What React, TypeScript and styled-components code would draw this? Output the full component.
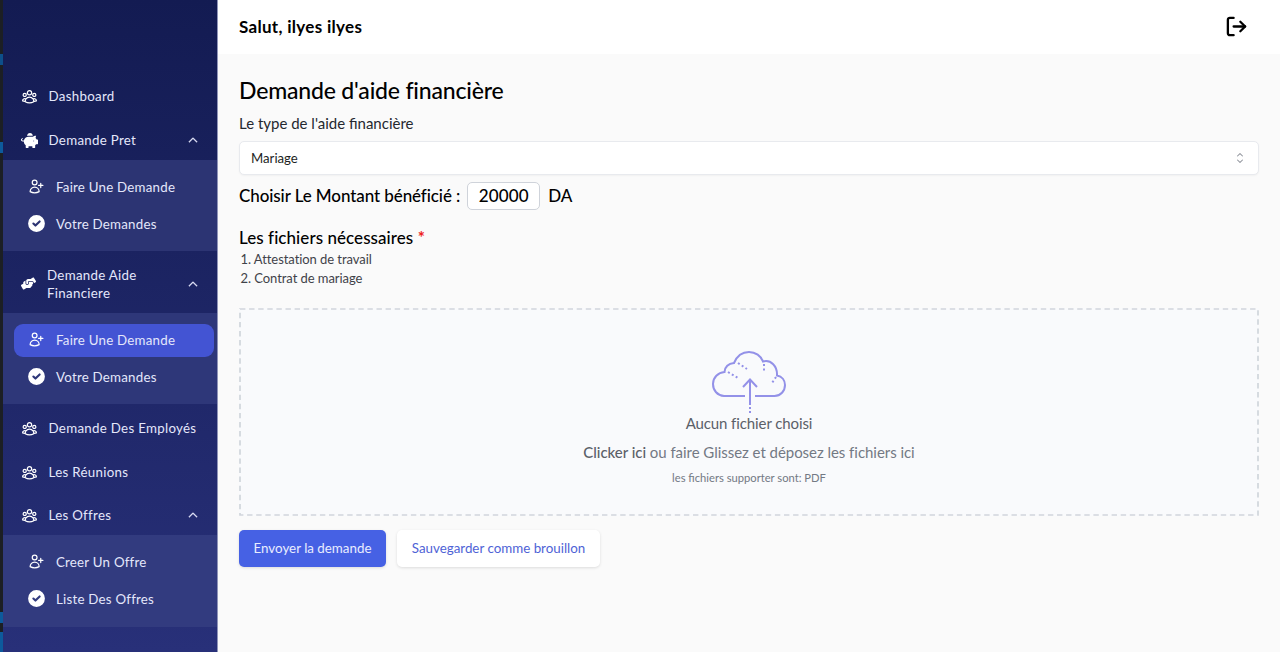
import React from "react";
import styled, { createGlobalStyle } from "styled-components";
import { HiOutlineUserGroup, HiOutlineUserPlus, HiChevronUp, HiChevronUpDown } from "react-icons/hi2";
import { HiCheckCircle } from "react-icons/hi";
import { FaPiggyBank, FaHandsHelping } from "react-icons/fa";
import { FiLogOut } from "react-icons/fi";

const Global = createGlobalStyle`
  * { box-sizing: border-box; }
  body { margin: 0; background: #fafafa; font-family: Lato, sans-serif; color: #000; }
  h1, h2, p { margin: 0; padding: 0; font-weight: inherit; }
  button { font: inherit; border: 0; }
`;

const Page = styled.div`display: flex; height: 652px; overflow: hidden;`;
const Edge = styled.div`
  width: 3px; flex: none;
  background: linear-gradient(#1c1f24 0 54px, #0d4f8a 54px 65px, #1c1f24 65px 142px, #0d5a9c 142px 153px, #1c1f24 153px 612px, #0d5a9c 612px 623px, #1c1f24 623px 632px, #0d5a9c 632px);
`;
const Sidebar = styled.nav`
  width: 215px; flex: none; padding-top: 74px;
  background: linear-gradient(#131b52, #283079);
  border-right: 1px solid #8f94b8;
  color: #e4e7fb; font-size: 13.3px; letter-spacing: 0.3px;
`;
const Item = styled.div<{ $h?: number; $drop?: number }>`
  display: flex; align-items: center; height: ${(p) => p.$h ?? 44}px;
  padding: ${(p) => p.$drop ?? 0}px 18px 0; line-height: 18px;
`;
const ItemIcon = styled.span<{ $w?: number }>`
  display: flex; width: ${(p) => p.$w ?? 27.5}px; flex: none; color: #fff;
`;
const Label = styled.span<{ $ls?: number }>`
  letter-spacing: ${(p) => (p.$ls === undefined ? "inherit" : `${p.$ls}px`)}; white-space: pre-line;
`;
const Caret = styled.span`
  margin-left: auto; display: flex;
  svg { stroke: currentColor; stroke-width: 1; }
`;
const Group = styled.div<{ $tone: string; $h?: number }>`
  height: ${(p) => p.$h ?? 91}px; padding: 11px 3px 0 11px;
  background: ${(p) => p.$tone};
  display: flex; flex-direction: column; gap: 4px; letter-spacing: 0.23px;
`;
const SubItem = styled.div<{ $active?: boolean }>`
  display: flex; align-items: center; height: 33px; padding: 0 0 2px 13.5px; border-radius: 9px;
  background: ${(p) => (p.$active ? "#4354d3" : "transparent")};
`;
const SubIcon = styled.span`
  display: flex; justify-content: center; width: 18px; margin-right: 10.5px; color: #fff;
  svg { flex: none; }
`;

const Main = styled.main`flex: 1; min-width: 0;`;
const Header = styled.header`
  height: 54px; background: #fff; display: flex; align-items: center; justify-content: space-between;
  padding: 0 32px 1px 21px; font-size: 17px; font-weight: 700;
`;
const Greeting = styled.div`letter-spacing: 0.3px; padding-bottom: 1px;`;
const Content = styled.section`padding: 21px 21px 0;`;
const Title = styled.h1`font-size: 23px; line-height: 30px; font-weight: 500; letter-spacing: -0.18px;`;
const FieldLabel = styled.p`font-size: 15px; line-height: 20px; margin-top: 8px; color: #25282f;`;
const Select = styled.div`
  margin-top: 8px; height: 34px; border: 1px solid #e8eaee; border-radius: 5px; background: #fff;
  display: flex; align-items: center; justify-content: space-between; padding: 0 10px 0 11px;
  font-size: 13.2px; color: #1d1f24; box-shadow: 0 1px 2px rgba(0, 0, 0, 0.04);
  svg { color: #8b8f98; }
`;
const Amount = styled.div`
  display: flex; align-items: center; height: 28px; margin-top: 7px; font-size: 17px; font-weight: 500;
  line-height: 20px;
`;
const AmountBox = styled.span`
  width: 73px; height: 28px; margin: 0 8px 0 7px; border: 1px solid #cfd3da; border-radius: 5px; background: #fff;
  display: flex; align-items: center; justify-content: center;
`;
const FilesTitle = styled.h2`font-size: 17px; line-height: 24px; margin-top: 16px; font-weight: 500; letter-spacing: 0.06px;`;
const Star = styled.span`color: #ee2020; font-weight: 700;`;
const Files = styled.div`
  font-size: 13px; line-height: 18.5px; height: 37px; color: #3f4249; padding-left: 1.5px; letter-spacing: -0.06px;
`;
const Drop = styled.div`
  margin-top: 21px; height: 208px; background: #f9fafc;
  display: flex; flex-direction: column; align-items: center; position: relative; color: #737984;
  padding-top: 42px;
`;
const DashFrame = styled.svg`position: absolute; inset: 0; width: 100%; height: 100%;`;
const Chosen = styled.p`font-size: 15px; line-height: 22px; color: #5b6069; margin-top: -2px; letter-spacing: -0.1px;`;
const Hint = styled.p`font-size: 15px; line-height: 22px; margin-top: 7px; letter-spacing: -0.04px;`;
const Strong = styled.span`font-weight: 500; color: #5b6069;`;
const Formats = styled.p`font-size: 11.2px; line-height: 16px; margin-top: 7px;`;
const Actions = styled.div`display: flex; gap: 11px; margin-top: 14px;`;
const Button = styled.button<{ $primary?: boolean; $w: number }>`
  width: ${(p) => p.$w}px; height: 37px; padding: 0 0 1px; border-radius: 5px; font-size: 13.35px;
  background: ${(p) => (p.$primary ? "#4661e4" : "#fff")};
  color: ${(p) => (p.$primary ? "#e9edff" : "#4f63d6")};
  box-shadow: 0 1px 3px rgba(0, 0, 0, 0.12);
`;

const Users = ({ label, open, h, drop }: { label: string; open?: boolean; h?: number; drop?: number }) => (
  <Item $h={h} $drop={drop}>
    <ItemIcon><HiOutlineUserGroup size={17} strokeWidth={1.7} /></ItemIcon>
    <Label>{label}</Label>
    {open && <Caret><HiChevronUp size={12} /></Caret>}
  </Item>
);
const Sub = ({ label, check, active }: { label: string; check?: boolean; active?: boolean }) => (
  <SubItem $active={active}>
    <SubIcon>{check ? <HiCheckCircle size={21} /> : <HiOutlineUserPlus size={17} strokeWidth={1.7} />}</SubIcon>
    <Label>{label}</Label>
  </SubItem>
);

const Cloud = () => (
  <svg width="76" height="64" viewBox="0 0 76 64" fill="none" stroke="#9391e8" strokeWidth="2">
    <path d="M34 46H13C6.500 45.500 2 40.500 2 34C2 27.500 7 22.500 13.500 22C14 17 17.500 13.500 23 13C26 6 31.500 2 38 2C44.500 2 50 6 52 11.500C60 9.500 66.500 16 66 25.500C71 26.500 74 30.500 74 35C74 41 69.500 46 63.500 46H44" />
    <path d="M39 55V30M32 37L39 29.500L46 37" />
    <path d="M39 57V64" strokeDasharray="2 2" />
    <path d="M17 22L27 28M27 13L36 19M53 14V22M65 27L61 33" strokeDasharray="2 2.500" />
  </svg>
);

export default function App() {
  return (
    <Page>
      <Global />
      <Edge />
      <Sidebar>
        <Users label="Dashboard" />
        <Item $h={42} $drop={2}>
          <ItemIcon><FaPiggyBank size={17} /></ItemIcon>
          <Label>Demande Pret</Label>
          <Caret><HiChevronUp size={12} /></Caret>
        </Item>
        <Group $tone="#2c3473"><Sub label="Faire Une Demande" /><Sub label="Votre Demandes" check /></Group>
        <Item $h={62} $drop={3}>
          <ItemIcon $w={26}><FaHandsHelping size={15} /></ItemIcon>
          <Label>{"Demande Aide\nFinanciere"}</Label>
          <Caret><HiChevronUp size={12} /></Caret>
        </Item>
        <Group $tone="#2e3779"><Sub label="Faire Une Demande" active /><Sub label="Votre Demandes" check /></Group>
        <Users label="Demande Des Employés" drop={4} />
        <Users label="Les Réunions" drop={4} />
        <Users label="Les Offres" open h={43} drop={3} />
        <Group $tone="#323b7f" $h={92}><Sub label="Creer Un Offre" /><Sub label="Liste Des Offres" check /></Group>
      </Sidebar>
      <Main>
        <Header><Greeting>Salut, ilyes ilyes</Greeting><FiLogOut size={23} strokeWidth={2.4} /></Header>
        <Content>
          <Title>Demande d'aide financière</Title>
          <FieldLabel>Le type de l'aide financière</FieldLabel>
          <Select><Label>Mariage</Label><HiChevronUpDown size={16} /></Select>
          <Amount>
            <Label $ls={-0.09}>Choisir Le Montant bénéficié :</Label>
            <AmountBox><Label $ls={0.15}>20000</Label></AmountBox>
            <Label>DA</Label>
          </Amount>
          <FilesTitle>Les fichiers nécessaires <Star>*</Star></FilesTitle>
          <Files><div>1. Attestation de travail</div><div>2. Contrat de mariage</div></Files>
          <Drop>
            <DashFrame><rect x="1" y="1" width="1018" height="206" fill="none" stroke="#d1d5db" strokeWidth="1.7" strokeDasharray="5.4 3.7" /></DashFrame>
            <Cloud />
            <Chosen>Aucun fichier choisi</Chosen>
            <Hint><Strong>Clicker ici</Strong> ou faire Glissez et déposez les fichiers ici</Hint>
            <Formats>les fichiers supporter sont: PDF</Formats>
          </Drop>
          <Actions>
            <Button $primary $w={147}>Envoyer la demande</Button>
            <Button $w={203}>Sauvegarder comme brouillon</Button>
          </Actions>
        </Content>
      </Main>
    </Page>
  );
}
